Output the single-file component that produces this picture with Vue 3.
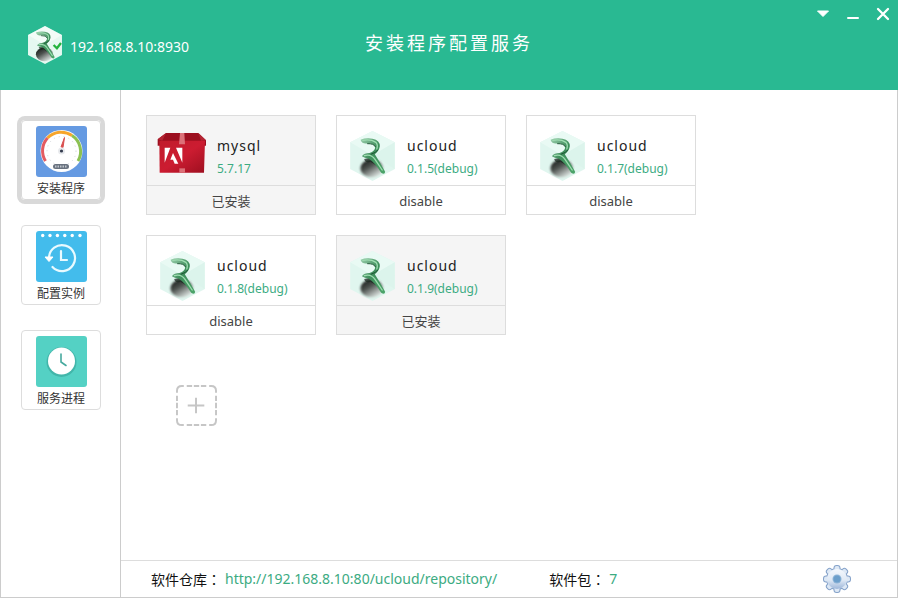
<script setup>
import { ref } from 'vue'

const tabs = [
  { id: 'install', label: '安装程序' },
  { id: 'config', label: '配置实例' },
  { id: 'process', label: '服务进程' }
]
const active = ref('install')

const packages = [
  { name: 'mysql', version: '5.7.17', status: '已安装', installed: true, icon: 'box' },
  { name: 'ucloud', version: '0.1.5(debug)', status: 'disable', installed: false, icon: 'logo' },
  { name: 'ucloud', version: '0.1.7(debug)', status: 'disable', installed: false, icon: 'logo' },
  { name: 'ucloud', version: '0.1.8(debug)', status: 'disable', installed: false, icon: 'logo' },
  { name: 'ucloud', version: '0.1.9(debug)', status: '已安装', installed: true, icon: 'logo' }
]
const spiralDots = [6.7, 14, 21.4, 28.8, 36.2, 44]
const teeth = [0, 45, 90, 135, 180, 225, 270, 315]
</script>

<template>
  <div class="window">
    <svg class="defs" aria-hidden="true">
      <defs>
        <linearGradient id="leaf" x1="0" y1="0" x2="1" y2="1">
          <stop offset="0" stop-color="#9ccfae" />
          <stop offset=".45" stop-color="#3f8f5c" />
          <stop offset="1" stop-color="#4da56a" />
        </linearGradient>
        <linearGradient id="ball" x1=".1" y1=".1" x2=".75" y2=".95">
          <stop offset="0" stop-color="#1a1f1c" />
          <stop offset=".4" stop-color="#4d524f" />
          <stop offset=".75" stop-color="#a4aaa7" />
          <stop offset="1" stop-color="#dfe8e4" />
        </linearGradient>
        <filter id="soft" x="-20%" y="-20%" width="140%" height="140%">
          <feGaussianBlur stdDeviation="3" />
        </filter>
        <symbol id="mark" viewBox="0 0 134 150">
          <ellipse cx="65" cy="112" rx="34" ry="27" fill="url(#ball)" filter="url(#soft)" />
          <path d="M42 84Q46 98 60 92Q78 100 92 118Q80 90 60 80Z" fill="#17251d" opacity=".7" />
          <path d="M31 26Q47 20 67 23Q90 28 89 46Q87 60 74 70Q84 86 105 122Q104 132 93 125Q74 94 56 83Q43 82 35 76Q42 66 58 66Q75 60 75 48Q72 37 52 37Q36 40 31 26Z" fill="url(#leaf)" />
          <path d="M38 28Q62 24 77 34Q84 41 80 54M43 74Q63 68 75 86L96 117" fill="none" stroke="#9edcb1" stroke-width="4" stroke-linecap="round" />
          <path d="M51 38Q71 37 76 48M62 70Q78 65 84 56" fill="none" stroke="#1f5435" stroke-width="3" />
        </symbol>
      </defs>
    </svg>

    <header class="header">
      <div class="host">
        <svg class="host-logo" viewBox="0 0 134 150" aria-hidden="true">
          <path d="M67 0L134 36V114L67 150L0 114V36Z" fill="#e6f8f1" />
          <path d="M67 0L134 36L67 75L0 36Z" fill="#fff" opacity=".5" />
          <use href="#mark" width="134" height="150" />
          <path d="M101 75L114 88L130 67" fill="none" stroke="#24b33e" stroke-width="9" />
        </svg>
        <span>192.168.8.10:8930</span>
      </div>
      <h1 class="title">安装程序配置服务</h1>
      <div class="controls">
        <button type="button" aria-label="菜单">
          <svg viewBox="0 0 14 14"><path d="M1.500 4H12.500L7 9.500Z" fill="#fff" stroke="#fff" stroke-linejoin="round" /></svg>
        </button>
        <button type="button" aria-label="最小化">
          <svg viewBox="0 0 14 14"><path d="M2 11H12" stroke="#fff" stroke-width="2" stroke-linecap="round" /></svg>
        </button>
        <button type="button" aria-label="关闭">
          <svg viewBox="0 0 14 14"><path d="M2 2L12 12M12 2L2 12" stroke="#fff" stroke-width="2.300" stroke-linecap="round" /></svg>
        </button>
      </div>
    </header>

    <div class="body">
      <nav class="sidebar">
        <button
          v-for="tab in tabs"
          :key="tab.id"
          type="button"
          class="tab"
          :class="{ active: active === tab.id }"
          @click="active = tab.id"
        >
          <svg v-if="tab.id === 'install'" class="tab-icon" viewBox="0 0 51 51" aria-hidden="true">
            <rect width="51" height="51" rx="3" fill="#659ae2" />
            <circle cx="25.500" cy="25" r="21" fill="#fff" />
            <g fill="none" stroke-width="3">
              <path d="M9.500 35A19 19 0 0 1 11.500 12" stroke="#e35b61" />
              <path d="M11.500 12A19 19 0 0 1 36 9.500" stroke="#f6a52b" />
              <path d="M36 9.500A19 19 0 0 1 42 35" stroke="#8cc152" />
            </g>
            <circle cx="25.500" cy="25" r="14.500" fill="none" stroke="#d3d6da" stroke-dasharray="1 4" />
            <path d="M28.500 11.500L25 21L27 21.500Z" fill="#d94f4f" stroke="#d94f4f" />
            <circle cx="25.500" cy="25" r="3.500" fill="#e8eaed" />
            <circle cx="25.500" cy="25" r="1.600" fill="#333b4d" />
            <rect x="17" y="38" width="16" height="5" rx="2.500" fill="#69727f" />
            <path d="M19 40.500H31" stroke="#bfc4cb" stroke-width="2" stroke-dasharray="1.500 1" />
          </svg>
          <svg v-else-if="tab.id === 'config'" class="tab-icon" viewBox="0 0 51 51" aria-hidden="true">
            <rect width="51" height="51" rx="3" fill="#43bcec" />
            <circle v-for="x in spiralDots" :key="x" :cx="x" cy="4.500" r="1.700" fill="#fff" />
            <g fill="none" stroke="#e9faff" stroke-width="2.200" stroke-linecap="round">
              <path d="M13 27A13 13 0 1 1 16.500 36" />
              <path d="M25 20V29H31" />
            </g>
            <path d="M9 26H17L13 30.500Z" fill="#fff" stroke="#fff" stroke-linejoin="round" />
          </svg>
          <svg v-else class="tab-icon" viewBox="0 0 51 51" aria-hidden="true">
            <rect width="51" height="51" rx="3" fill="#54d1c4" />
            <circle cx="25.500" cy="26" r="15" fill="#42b6aa" />
            <circle cx="25.500" cy="25" r="13.500" fill="#fff" />
            <path d="M25 18V26L30 29.500" fill="none" stroke="#46a99e" stroke-width="1.600" stroke-linecap="round" />
          </svg>
          <span>{{ tab.label }}</span>
        </button>
      </nav>

      <div class="content">
        <main class="main">
          <div class="cards">
            <article
              v-for="pkg in packages"
              :key="pkg.name + pkg.version"
              class="card"
              :class="{ installed: pkg.installed }"
            >
              <div class="card-top">
                <div class="card-icon">
                  <svg v-if="pkg.icon === 'box'" width="50" height="50" viewBox="0 -4 150 150" aria-hidden="true">
                    <defs>
                      <linearGradient id="front" x1="0" y1="0" x2="1" y2="1">
                        <stop offset="0" stop-color="#c01c2b" />
                        <stop offset=".5" stop-color="#cc1c31" />
                        <stop offset="1" stop-color="#9e0f20" />
                      </linearGradient>
                    </defs>
                    <path d="M2 21L27 2H124L147 24V40H2Z" fill="#9c0f1f" />
                    <path d="M2 21L16 25L27 2ZM147 24L132 25L124 2Z" fill="#b32432" />
                    <path d="M7 25H144L141 121H8Z" fill="url(#front)" />
                    <path d="M69 2H82L84 36H66Z" fill="#dc7078" />
                    <path d="M67 108H84V121H67Z" fill="#dc7078" />
                    <path d="M23 46H40L23 91ZM57 46H76V91ZM48 62L64 94H53L48 82H40Z" fill="#fff" />
                  </svg>
                  <svg v-else width="45" height="50" viewBox="0 0 134 150" aria-hidden="true">
                    <path d="M67 0L134 34V114L67 150L0 114V34Z" fill="#e0f6ef" />
                    <path d="M67 0L134 34L67 73L0 34Z" fill="#e9faf4" />
                    <path d="M67 73L134 34V114Z" fill="#d8f3ea" opacity=".6" />
                    <use href="#mark" width="134" height="150" />
                  </svg>
                </div>
                <div class="card-text">
                  <h2 class="name">{{ pkg.name }}</h2>
                  <p class="version">{{ pkg.version }}</p>
                </div>
              </div>
              <div class="status">{{ pkg.status }}</div>
            </article>
          </div>
          <button type="button" class="add" aria-label="添加">
            <svg viewBox="0 0 42 42" fill="none" stroke="#c6c6c6" stroke-width="2">
              <path d="M1 8V6Q1 1 6 1H8M34 1H36Q41 1 41 6V8M41 34V36Q41 41 36 41H34M8 41H6Q1 41 1 36V34" />
              <path d="M11 1H31M11 41H31M1 11V31M41 11V31" stroke-dasharray="5.500 1.750" />
              <path d="M12 21H29M20.500 13V29" />
            </svg>
          </button>
        </main>

        <footer class="footer">
          <div class="info">
            <span>软件仓库<span class="colon">：</span></span>
            <a href="http://192.168.8.10:80/ucloud/repository/">http://192.168.8.10:80/ucloud/repository/</a>
          </div>
          <div class="info">
            <span>软件包<span class="colon">：</span></span>
            <span class="count">7</span>
          </div>
          <button type="button" class="settings" aria-label="设置">
            <svg viewBox="0 0 28 28">
              <defs>
                <linearGradient id="gear" x1="0" y1="0" x2="0" y2="1">
                  <stop offset="0" stop-color="#f4f8fd" />
                  <stop offset=".55" stop-color="#dfe9f5" />
                  <stop offset="1" stop-color="#9db6d9" />
                </linearGradient>
              </defs>
              <g fill="#86a3ca">
                <circle cx="14" cy="14" r="11" />
                <rect v-for="a in teeth" :key="a" x="10.500" y="0" width="7" height="9" rx="3" :transform="`rotate(${a} 14 14)`" />
              </g>
              <g fill="#dde8f5">
                <circle cx="14" cy="14" r="10" />
                <rect v-for="a in teeth" :key="a" x="11.500" y="1" width="5" height="8" rx="2" :transform="`rotate(${a} 14 14)`" />
              </g>
              <circle cx="14" cy="14" r="10" fill="url(#gear)" />
              <circle cx="14" cy="14" r="4.500" fill="#8fb5d8" />
              <circle cx="14" cy="14" r="3.500" fill="#6c9fcb" />
            </svg>
          </button>
        </footer>
      </div>
    </div>
  </div>
</template>

<style>
body {
  margin: 0;
  background: #fff;
}
</style>

<style scoped>
* {
  box-sizing: border-box;
}
.window {
  display: flex;
  flex-direction: column;
  min-height: 100vh;
  font-family: "Noto Sans", "Noto Sans CJK SC", sans-serif;
  font-size: 14px;
  color: #222;
}
.defs {
  position: absolute;
  width: 0;
  height: 0;
}
button {
  padding: 0;
  border: 0;
  background: none;
  font: inherit;
  color: inherit;
  cursor: pointer;
}
svg {
  display: block;
}
h1,
h2,
p {
  margin: 0;
  font-weight: 400;
}
.header {
  display: grid;
  grid-template-columns: 1fr auto 1fr;
  height: 90px;
  background: #29b992;
  color: #fff;
}
.host {
  display: flex;
  align-items: center;
  gap: 8px;
  padding-left: 28px;
}
.host-logo {
  width: 34px;
  height: 38px;
}
.host span {
  padding-top: 2px;
}
.title {
  padding-top: 30px;
  font-size: 18px;
  line-height: 26px;
  letter-spacing: 3px;
}
.controls {
  display: flex;
  justify-content: flex-end;
  align-items: flex-start;
  gap: 16px;
  padding: 7px 8px 0 0;
}
.controls svg {
  width: 14px;
  height: 14px;
}
.body {
  display: flex;
  flex: 1;
  border: 1px solid #ccc;
  border-top: 0;
}
.sidebar {
  display: flex;
  flex-direction: column;
  gap: 25px;
  width: 120px;
  padding: 30px 19px 30px 20px;
  border-right: 1px solid #ccc;
}
.tab {
  display: flex;
  flex-direction: column;
  align-items: center;
  height: 80px;
  padding-top: 5px;
  border: 1px solid #ddd;
  border-radius: 4px;
  font-size: 12px;
  line-height: 24px;
  color: #333;
}
.tab.active {
  border-color: #d9d9d9;
  box-shadow: 0 0 0 4px #d9d9d9;
}
.tab-icon {
  flex: none;
  width: 51px;
  height: 51px;
}
.content {
  display: flex;
  flex: 1;
  flex-direction: column;
  min-width: 0;
}
.main {
  flex: 1;
  padding: 25px;
}
.cards {
  display: grid;
  grid-template-columns: repeat(auto-fill, 170px);
  gap: 20px;
}
.card {
  border: 1px solid #ddd;
}
.card.installed {
  background: #f5f5f5;
}
.card-top {
  display: flex;
  height: 70px;
  border-bottom: 1px solid #ddd;
}
.card-icon {
  display: flex;
  justify-content: center;
  width: 70px;
  padding-top: 15px;
}
.name {
  padding-top: 18px;
  font-size: 14px;
  line-height: 24px;
  letter-spacing: 1px;
}
.version {
  font-size: 12px;
  line-height: 22px;
  color: #3cab82;
}
.status {
  height: 28px;
  font-size: 13px;
  line-height: 30px;
  text-align: center;
  color: #444;
}
.add {
  display: block;
  margin: 50px 0 0 30px;
}
.add svg {
  width: 41px;
  height: 41px;
}
.footer {
  display: flex;
  align-items: center;
  gap: 52px;
  height: 37px;
  padding: 0 46px 0 30px;
  border-top: 1px solid #ddd;
}
.info {
  display: flex;
  gap: 4px;
  color: #111;
}
.colon {
  font-family: "Noto Sans CJK TC", sans-serif;
}
.info a,
.count {
  color: #3cab82;
  text-decoration: none;
}
.settings {
  margin-left: auto;
}
.settings svg {
  width: 28px;
  height: 28px;
}
</style>
